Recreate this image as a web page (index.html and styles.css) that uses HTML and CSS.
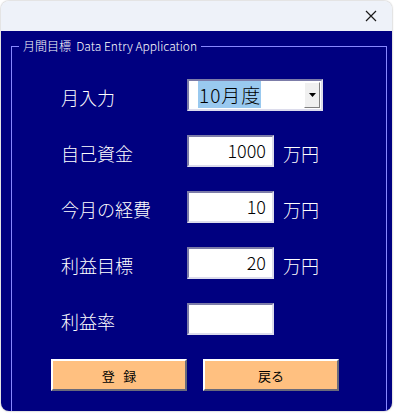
FILE: index.html
```html
<!DOCTYPE html>
<html lang="ja">
<head>
    <meta charset="UTF-8">
    <meta name="viewport" content="width=device-width, initial-scale=1.0">
    <title>月間目標</title>
    <link rel="stylesheet" href="styles.css">
</head>
<body>
    <div class="window">
        <div class="title-bar">
            <button class="close-btn" aria-label="閉じる">
                <svg width="12" height="12" viewBox="0 0 12 12">
                    <path d="M1 1 L11 11 M11 1 L1 11" stroke="#1a1a1a" stroke-width="1.2" fill="none"/>
                </svg>
            </button>
        </div>

        <div class="client">
            <fieldset class="group">
                <legend>月間目標&nbsp;&nbsp;Data Entry Application</legend>

                <div class="form">
                    <div class="row">
                        <label class="label">月入力</label>
                        <div class="combo">
                            <span class="combo-text"><span class="selected">10月度</span></span>
                            <span class="combo-btn">
                                <svg width="7" height="4" viewBox="0 0 7 4"><path d="M0 0 H7 L3.5 4 Z" fill="#000"/></svg>
                            </span>
                        </div>
                    </div>

                    <div class="row">
                        <label class="label">自己資金</label>
                        <input class="field" type="text" value="1000">
                        <span class="unit">万円</span>
                    </div>

                    <div class="row">
                        <label class="label">今月の経費</label>
                        <input class="field" type="text" value="10">
                        <span class="unit">万円</span>
                    </div>

                    <div class="row">
                        <label class="label">利益目標</label>
                        <input class="field" type="text" value="20">
                        <span class="unit">万円</span>
                    </div>

                    <div class="row">
                        <label class="label">利益率</label>
                        <input class="field" type="text" value="">
                    </div>
                </div>

                <div class="buttons">
                    <button class="action-btn">登&nbsp;&nbsp;&nbsp;録</button>
                    <button class="action-btn">戻る</button>
                </div>
            </fieldset>
        </div>
    </div>
</body>
</html>
```

FILE: styles.css
```css
/* Reset */
* {
    margin: 0;
    padding: 0;
    box-sizing: border-box;
}

body {
    background-color: #ffffff;
    font-family: "Noto Sans CJK JP", "Noto Sans", sans-serif;
    font-weight: 300;
    width: 394px;
    height: 413px;
    overflow: hidden;
}

.window {
    width: 391px;
    height: 410px;
    margin: 1px 0 0 1px;
    border-radius: 8px;
    overflow: hidden;
    box-shadow: 0 0 2px rgba(0, 0, 0, 0.4);
    display: flex;
    flex-direction: column;
}

.title-bar {
    height: 30px;
    background-color: #eef2f9; /* Light title */
    display: flex;
    justify-content: flex-end;
    align-items: center;
}

.close-btn {
    width: 46px;
    height: 30px;
    border: none;
    background: transparent;
    display: flex;
    align-items: center;
    justify-content: center;
    padding-left: 4px;
}

.client {
    flex: 1;
    background-color: #000080; /* Navy */
    padding: 0 5px 0 10px;
}

.group {
    border: 1px solid #8888ff;
    height: 375px;
    margin-top: 7px;
    padding: 0;
    display: flex;
    flex-direction: column;
}

.group legend {
    color: #ffffff;
    font-size: 12px;
    line-height: 16px;
    margin-left: 7px;
    padding: 0 4px;
}

.form {
    display: flex;
    flex-direction: column;
    gap: 24px;
    padding: 25px 0 0 49px;
}

.row {
    display: flex;
    align-items: center;
    height: 32px;
}

.label {
    width: 126px;
    color: #ffffff;
    font-size: 18px;
    line-height: 20px;
    padding-top: 3px;
}

.combo {
    width: 136px;
    height: 32px;
    background-color: #ffffff;
    border-top: 2px solid #7c7ca8;
    border-left: 2px solid #7c7ca8;
    border-bottom: 2px solid #dcdcec;
    border-right: 2px solid #dcdcec;
    display: flex;
    align-items: center;
    padding-right: 1px;
}

.combo-text {
    flex: 1;
    padding-left: 9px;
    font-size: 19px;
    line-height: 20px;
    letter-spacing: 1px;
    color: #000000;
}

.selected {
    background-color: #99c9ef;
    padding: 0 0 0 1px;
}

.combo-btn {
    width: 16px;
    height: 26px;
    background-color: #f0f0f0;
    border-top: 1px solid #ffffff;
    border-left: 1px solid #ffffff;
    border-bottom: 1px solid #808080;
    border-right: 1px solid #808080;
    display: flex;
    align-items: center;
    justify-content: center;
}

.field {
    width: 87px;
    height: 32px;
    background-color: #ffffff;
    border-top: 2px solid #7c7ca8;
    border-left: 2px solid #7c7ca8;
    border-bottom: 2px solid #dcdcec;
    border-right: 2px solid #dcdcec;
    text-align: right;
    font-family: "Noto Sans CJK JP", "Noto Sans", sans-serif;
    font-weight: 300;
    font-size: 18px;
    color: #000000;
    padding: 0 6px 2px 4px;
    outline: none;
}

.unit {
    color: #ffffff;
    font-size: 18px;
    margin-left: 9px;
    padding-top: 3px;
}

.buttons {
    display: flex;
    gap: 16px;
    padding: 24px 0 0 39px;
}

.action-btn {
    width: 136px;
    height: 32px;
    background-color: #ffc080; /* Peach */
    border-top: 2px solid #ffffff;
    border-left: 2px solid #ffffff;
    border-bottom: 2px solid #6a6a7a;
    border-right: 2px solid #6a6a7a;
    font-family: "Noto Sans CJK JP", "Noto Sans", sans-serif;
    font-size: 13px;
    color: #000000;
    cursor: pointer;
}
```
